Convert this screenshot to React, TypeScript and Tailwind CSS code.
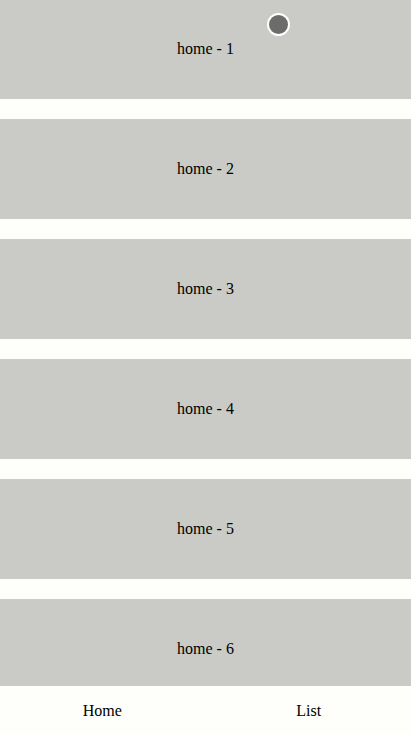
import React from 'react';

const items = [1, 2, 3, 4, 5, 6];

export default function App() {
  return (
    <div className="relative flex h-[734px] w-full flex-col overflow-hidden bg-[#fefffa] text-base text-black" style={{ fontFamily: '"Liberation Serif", serif' }}>
      {/* List */}
      <div className="min-h-0 flex-1 overflow-hidden">
        <div className="-mt-px">
          {items.map((n) => (
            <div key={n} className="mb-5 flex h-[100px] items-center justify-center bg-[#cacbc6]">
              home - {n}
            </div>
          ))}
        </div>
      </div>

      {/* Tab bar */}
      <div className="flex h-12 shrink-0 items-center bg-[#fefffa] pt-px">
        <div className="flex flex-1 justify-center">Home</div>
        <div className="flex flex-1 justify-center pl-0.5">List</div>
      </div>

      {/* Touch indicator */}
      <div className="absolute left-[267px] top-[13px] h-[23px] w-[23px] rounded-full border-2 border-white bg-[#6c6c6a]" />
    </div>
  );
}
